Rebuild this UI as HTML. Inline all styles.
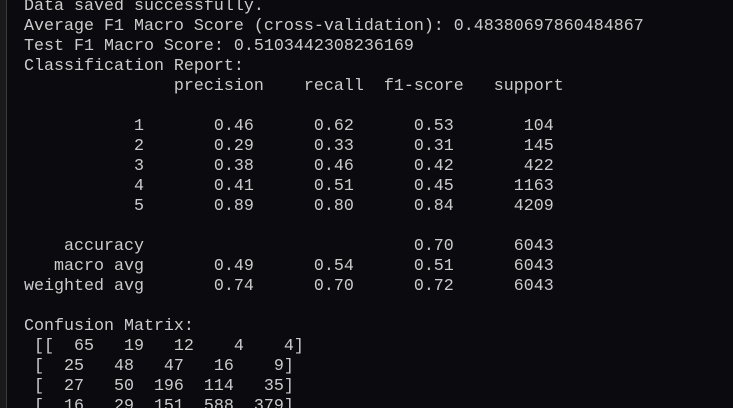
<!DOCTYPE html>
<html><head><meta charset="utf-8"><style>
html,body{margin:0;padding:0;background:#0b0b0f;overflow:hidden;}
body{width:733px;height:408px;overflow:hidden;position:relative;}
.bar{position:absolute;left:0;top:0;width:6px;height:408px;background:#1a1a1a;border-right:1px solid #3a3a3a;}
pre{position:absolute;left:24px;top:-3px;margin:0;font-family:"Liberation Mono","Courier New",monospace;font-size:16.67px;line-height:20px;color:#cccccc;}
</style></head><body>
<div class="bar"></div>
<pre>Data saved successfully.
Average F1 Macro Score (cross-validation): 0.48380697860484867
Test F1 Macro Score: 0.5103442308236169
Classification Report:
               precision    recall  f1-score   support

           1       0.46      0.62      0.53       104
           2       0.29      0.33      0.31       145
           3       0.38      0.46      0.42       422
           4       0.41      0.51      0.45      1163
           5       0.89      0.80      0.84      4209

    accuracy                           0.70      6043
   macro avg       0.49      0.54      0.51      6043
weighted avg       0.74      0.70      0.72      6043

Confusion Matrix:
 [[  65   19   12    4    4]
 [  25   48   47   16    9]
 [  27   50  196  114   35]
 [  16   29  151  588  379]</pre>
</body></html>
